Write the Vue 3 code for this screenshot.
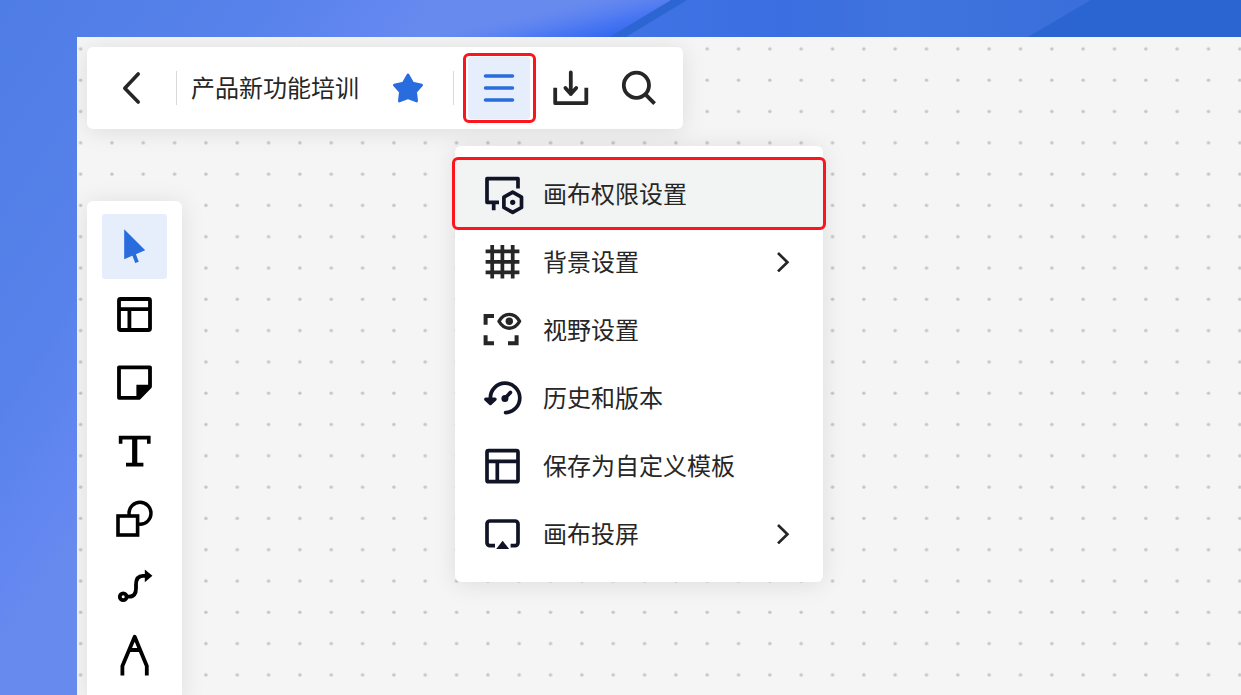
<script setup>
import { ref } from 'vue'

const title = ref('产品新功能培训')

const menuItems = [
  { id: 'permission', label: '画布权限设置', current: true },
  { id: 'grid', label: '背景设置', sub: true },
  { id: 'view', label: '视野设置' },
  { id: 'history', label: '历史和版本' },
  { id: 'template', label: '保存为自定义模板' },
  { id: 'cast', label: '画布投屏', sub: true },
]

const tools = [
  { id: 'select', label: '选择' },
  { id: 'template', label: '模板' },
  { id: 'note', label: '便签' },
  { id: 'text', label: '文本' },
  { id: 'shape', label: '形状' },
  { id: 'connector', label: '连线' },
  { id: 'pen', label: '画笔' },
]
const activeTool = ref('select')
</script>

<template>
  <div class="page">
    <svg class="backdrop" viewBox="0 0 1241 695" preserveAspectRatio="none" aria-hidden="true">
      <defs>
        <linearGradient id="base" gradientUnits="userSpaceOnUse" x1="0" y1="0" x2="303" y2="203">
          <stop offset="0" stop-color="#4e7de5" />
          <stop offset="0.62" stop-color="#5882eb" />
          <stop offset="0.9" stop-color="#6387f0" />
          <stop offset="1" stop-color="#678aee" />
        </linearGradient>
        <linearGradient id="glow" gradientUnits="userSpaceOnUse" x1="30" y1="130" x2="40" y2="173">
          <stop offset="0" stop-color="#5b80f2" stop-opacity="0" />
          <stop offset="0.55" stop-color="#4675f3" stop-opacity="0.85" />
          <stop offset="1" stop-color="#2f63ee" />
        </linearGradient>
        <linearGradient id="band" gradientUnits="userSpaceOnUse" x1="620" y1="0" x2="1090" y2="0">
          <stop offset="0" stop-color="#4073e4" />
          <stop offset="0.35" stop-color="#3b6ee0" />
          <stop offset="0.6" stop-color="#3f73dd" />
          <stop offset="1" stop-color="#3a6eda" />
        </linearGradient>
      </defs>
      <rect width="1241" height="695" fill="url(#base)" />
      <rect x="400" width="300" height="40" fill="url(#glow)" />
      <path d="M686 0H1241V60H584Z" fill="url(#band)" />
      <path d="M671 0H687L621 40H605Z" fill="#2c66d3" />
      <path d="M1091 0H1241V40H1023Z" fill="#2a65d1" />
    </svg>

    <main class="canvas">
      <svg class="dots" width="100%" height="100%" aria-hidden="true">
        <defs>
          <pattern id="dot" patternUnits="userSpaceOnUse" x="-12" y="-4" width="31.33" height="31.3">
            <circle cx="15.6" cy="15.8" r="1.7" fill="#c6c6c6" />
          </pattern>
        </defs>
        <rect width="100%" height="100%" fill="url(#dot)" />
      </svg>

      <header class="toolbar">
        <button class="tool" type="button" aria-label="返回">
          <svg class="icon" viewBox="0 0 40 40"><path d="M27.2 6 13.8 20.2 27.2 34" stroke-width="3.6" stroke-linecap="round" stroke-linejoin="round" /></svg>
        </button>
        <span class="divider"></span>
        <h1 class="title">{{ title }}</h1>
        <button class="tool star" type="button" aria-label="收藏">
          <svg class="icon" viewBox="0 0 40 40"><path d="M20 7 24.7 15.2 33.6 17 27.6 23.8 28.6 33 20 29.6 11.4 33 12.4 23.8 6.4 17 15.3 15.2Z" fill="currentColor" stroke-width="2.8" stroke-linejoin="round" /></svg>
        </button>
        <span class="divider"></span>
        <div class="menu-anchor">
          <button class="tool active framed" type="button" aria-label="菜单" aria-expanded="true">
            <svg class="icon" viewBox="0 0 40 40"><path d="M6.5 8H33.5M6.5 20H33.5M6.5 32H33.5" stroke-width="3.5" stroke-linecap="round" /></svg>
          </button>

          <nav class="menu" aria-label="画布菜单">
            <button
              v-for="item in menuItems"
              :key="item.id"
              type="button"
              class="item"
              :class="{ current: item.current, framed: item.current }"
            >
              <svg class="icon" :class="'ink-' + item.id" viewBox="0 0 40 40" stroke-width="3.7" aria-hidden="true">
                <g v-if="item.id === 'permission'" stroke-linejoin="round">
                  <path d="M36 14.5V4.6H5V28.3H17M11.7 28.3V36.3" />
                  <path d="M30.7 18.2 39.5 23.1V33.5L30.7 38.4 21.9 33.5V23.1Z" />
                  <circle cx="30.7" cy="28.3" r="2.6" fill="currentColor" stroke="none" />
                </g>
                <path v-else-if="item.id === 'grid'" d="M10.2 3V36.5M20.4 3V36.5M30.7 3V36.5M3.6 9.4H37.4M3.6 19.8H37.4M3.6 30.3H37.4" />
                <g v-else-if="item.id === 'view'">
                  <path d="M12 6.1H3.6V14.7M3.6 25.3V33.3H12M26 33.3H34.6V25.3" stroke-width="4" />
                  <path d="M17 11.3C19.4 6.8 23 4.4 27.3 4.4S35.2 6.8 37.6 11.3C35.2 15.8 31.6 18.2 27.3 18.2S19.4 15.8 17 11.3Z" stroke-width="3.4" stroke-linejoin="round" />
                  <circle cx="27.3" cy="11.3" r="3.7" fill="currentColor" stroke="none" />
                </g>
                <g v-else-if="item.id === 'history'" stroke-linecap="round" stroke-linejoin="round">
                  <path d="M8.4 24V20A14.7 14.7 0 1 1 23.6 34.6" />
                  <path d="M3.8 21.2 8.4 25.4 13 21.2Z" fill="currentColor" stroke-width="3.4" />
                  <path d="M23.2 20.2 28.4 14.4" />
                  <circle cx="22.9" cy="20.4" r="3.5" fill="currentColor" stroke="none" />
                </g>
                <g v-else-if="item.id === 'template'">
                  <rect x="5" y="4.7" width="31" height="31" rx="1.5" />
                  <path d="M5 15.3H36M15.3 15.3V35.7" />
                </g>
                <g v-else>
                  <path d="M13 31.7H8A3 3 0 0 1 5 28.7V10A3 3 0 0 1 8 7H33A3 3 0 0 1 36 10V28.7A3 3 0 0 1 33 31.7H28.6" />
                  <path d="M20.6 26.8 27.2 35H14.2Z" fill="currentColor" stroke="none" />
                </g>
              </svg>
              <span class="label">{{ item.label }}</span>
              <svg v-if="item.sub" class="chevron" viewBox="0 0 20 20" aria-hidden="true"><path d="M5 1 14.4 10.2 5 19.4" /></svg>
            </button>
          </nav>
        </div>
        <button class="tool download" type="button" aria-label="导出">
          <svg class="icon" viewBox="0 0 40 40" stroke-width="3.8">
            <path d="M4.2 19.8V35.2H35.3V19.8" stroke-linejoin="round" />
            <path d="M19.8 4.5V26M14.4 20 19.8 26 25.2 20" stroke-linecap="round" stroke-linejoin="round" />
          </svg>
        </button>
        <button class="tool search" type="button" aria-label="搜索">
          <svg class="icon" viewBox="0 0 40 40" stroke-width="3.8">
            <circle cx="17.4" cy="17.2" r="12.6" />
            <path d="M26.4 26.4 35.6 35.6" />
          </svg>
        </button>
      </header>

      <aside class="rail" aria-label="工具栏">
        <button
          v-for="tool in tools"
          :key="tool.id"
          type="button"
          class="rail-tool"
          :class="{ active: activeTool === tool.id }"
          :aria-label="tool.label"
          @click="activeTool = tool.id"
        >
          <svg class="rail-icon" viewBox="0 0 41 41" stroke-width="3.8" aria-hidden="true">
            <g v-if="tool.id === 'select'">
              <path d="M10.2 3.2 31.2 24.2 10.2 33.2Z" fill="currentColor" stroke="none" />
              <path d="M19 26 23 36.4" />
            </g>
            <g v-else-if="tool.id === 'template'">
              <rect x="5" y="5" width="31" height="31" rx="1.5" />
              <path d="M5 15.2H36M15.4 15.2V36" />
            </g>
            <g v-else-if="tool.id === 'note'" stroke-linejoin="round">
              <path d="M5 5.3H36V24.6L25 35.8H5Z" />
              <path d="M22.4 22.7H37V24.6L25.6 36.6H22.4Z" fill="currentColor" stroke="none" />
            </g>
            <g v-else-if="tool.id === 'text'">
              <path d="M6.6 13.7V7.6H34.8V13.7M12 34.6H29.4" stroke-width="3.6" />
              <path d="M20.7 7V35" stroke-width="5.2" />
            </g>
            <g v-else-if="tool.id === 'shape'">
              <circle cx="26" cy="15.3" r="11" stroke-width="3.4" />
              <rect x="4" y="18" width="19.6" height="19" fill="#fff" stroke-width="3.6" />
            </g>
            <g v-else-if="tool.id === 'connector'">
              <circle cx="9.2" cy="30.7" r="3.4" />
              <path d="M13 30.7H15C20 30.7 22 27.6 22 22.6V18.6C22 12.8 24 9.8 29 9.8H32" />
              <path d="M30.8 3.6 38.4 9.8 30.8 16.2Z" fill="currentColor" stroke="none" />
            </g>
            <g v-else>
              <path d="M8.4 41.4V32L20.7 2.8 32.8 32V41.4M14.6 16H26.8" stroke-linejoin="round" />
            </g>
          </svg>
        </button>
      </aside>
    </main>
  </div>
</template>

<style>
body {
  margin: 0;
}
</style>

<style scoped>
.page {
  position: relative;
  box-sizing: border-box;
  display: flex;
  height: 100vh;
  padding: 37px 0 0 77px;
  overflow: hidden;
  font-family: "Noto Sans CJK SC", sans-serif;
  color: #262626;
}

.canvas {
  position: relative;
  box-sizing: border-box;
  display: flex;
  flex: 1;
  flex-direction: column;
  align-items: flex-start;
  gap: 72px;
  min-width: 0;
  padding: 10px 10px 0;
  overflow: hidden;
  background: #f5f5f5;
}

button {
  padding: 0;
  border: 0;
  background: none;
  color: inherit;
  font: inherit;
  cursor: pointer;
}

svg {
  flex: none;
  fill: none;
  stroke: currentColor;
}

.backdrop,
.dots {
  position: absolute;
  inset: 0;
  width: 100%;
  height: 100%;
  stroke: none;
}

.icon {
  display: block;
  width: 40px;
  height: 40px;
  overflow: visible;
}

.toolbar {
  position: relative;
  z-index: 2;
  display: flex;
  align-items: center;
  padding: 10px 13px;
  border-radius: 6px;
  background: #fff;
  box-shadow: 0 2px 24px rgba(0, 0, 0, 0.1);
}

.tool {
  position: relative;
  display: flex;
  align-items: center;
  justify-content: center;
  width: 62px;
  height: 62px;
  border-radius: 3px;
}

.divider {
  width: 1px;
  height: 34px;
  margin: 0 14px;
  background: #d9d9d9;
}

.title {
  margin: 0;
  padding-bottom: 2px;
  font-size: 24px;
  font-weight: 400;
  line-height: 36px;
  white-space: nowrap;
}

.star {
  margin-left: 18px;
  color: #286cde;
}

.active {
  background: #e6eefc;
  color: #286cde;
}

.download {
  margin: 0 6px 0 10px;
}

.framed::after {
  position: absolute;
  inset: -4px -6px -4px -5px;
  border: 3px solid #fb151d;
  border-radius: 6px;
  content: "";
}

.menu-anchor {
  position: relative;
}

.menu {
  position: absolute;
  top: 89px;
  left: -13px;
  width: 368px;
  padding: 14px 0;
  border-radius: 6px;
  background: #fff;
  box-shadow: 0 2px 24px rgba(0, 0, 0, 0.1);
}

.item {
  position: relative;
  box-sizing: border-box;
  display: flex;
  align-items: center;
  gap: 21px;
  width: 100%;
  height: 68px;
  padding: 0 30px 0 27px;
  font-size: 24px;
  line-height: 36px;
  text-align: left;
  white-space: nowrap;
}

.item.current {
  background: #f2f3f3;
}

.item.framed::after {
  inset: -3px -3px -2px;
}

.ink-permission,
.ink-history,
.ink-template,
.ink-cast {
  color: #101426;
}

.label {
  flex: 1;
  padding-bottom: 2px;
}

.chevron {
  width: 20px;
  height: 20px;
  stroke-width: 2.7;
}

.rail {
  position: relative;
  display: flex;
  flex: 1;
  flex-direction: column;
  gap: 3px;
  padding: 13px 15px;
  border-radius: 6px 6px 0 0;
  background: #fff;
  box-shadow: 0 2px 24px rgba(0, 0, 0, 0.1);
}

.rail-tool {
  display: flex;
  flex: none;
  align-items: center;
  justify-content: center;
  width: 65px;
  height: 65px;
  border-radius: 3px;
  color: #000;
}

.rail-tool.active {
  color: #286cde;
}

.rail-icon {
  display: block;
  width: 41px;
  height: 41px;
  overflow: visible;
}
</style>
